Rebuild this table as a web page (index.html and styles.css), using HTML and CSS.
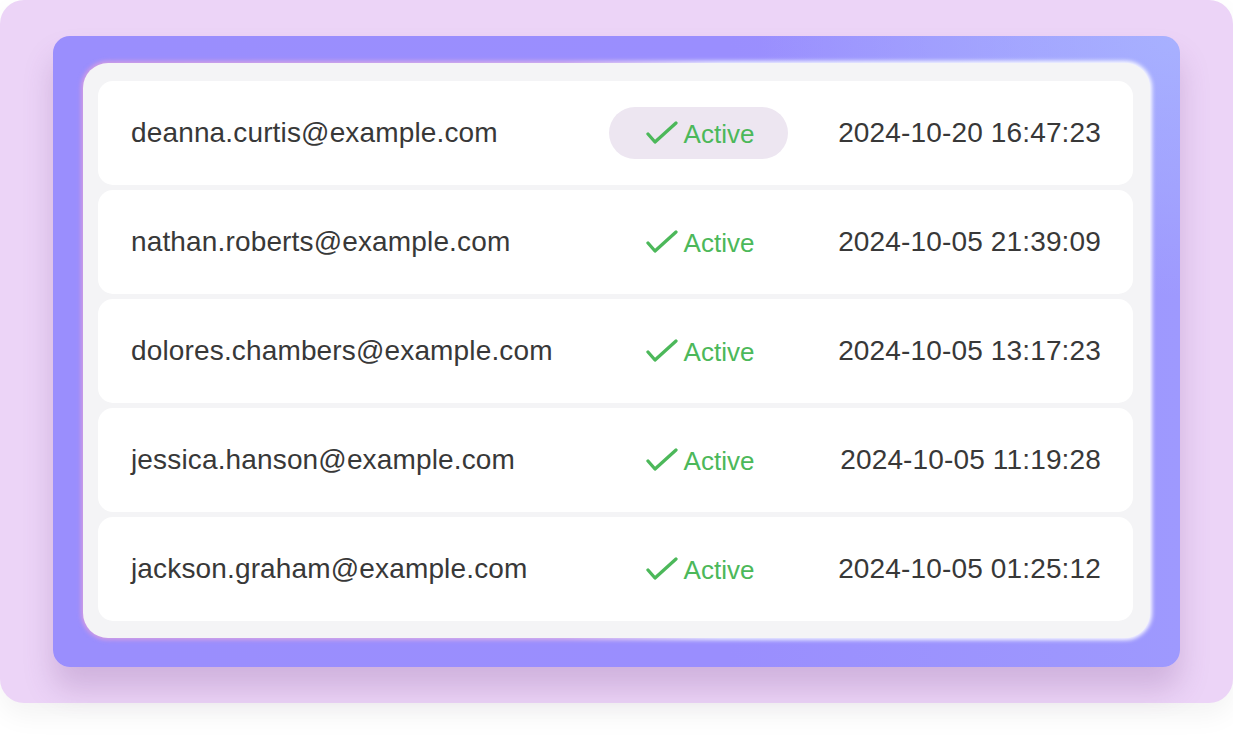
FILE: index.html
```html
<!DOCTYPE html>
<html>
<head>
<meta charset="utf-8">
<link rel="stylesheet" href="styles.css">
</head>
<body>
<div class="stage">
  <div class="card">
    <div class="panel">
      <div class="row">
        <span class="email">deanna.curtis@example.com</span>
        <span class="status hover"><svg class="check" viewBox="0 0 34 26" width="34" height="26"><polyline points="3,13 10,21 31,2" /></svg><span>Active</span></span>
        <span class="date">2024-10-20 16:47:23</span>
      </div>
      <div class="row">
        <span class="email">nathan.roberts@example.com</span>
        <span class="status"><svg class="check" viewBox="0 0 34 26" width="34" height="26"><polyline points="3,13 10,21 31,2" /></svg><span>Active</span></span>
        <span class="date">2024-10-05 21:39:09</span>
      </div>
      <div class="row">
        <span class="email">dolores.chambers@example.com</span>
        <span class="status"><svg class="check" viewBox="0 0 34 26" width="34" height="26"><polyline points="3,13 10,21 31,2" /></svg><span>Active</span></span>
        <span class="date">2024-10-05 13:17:23</span>
      </div>
      <div class="row">
        <span class="email">jessica.hanson@example.com</span>
        <span class="status"><svg class="check" viewBox="0 0 34 26" width="34" height="26"><polyline points="3,13 10,21 31,2" /></svg><span>Active</span></span>
        <span class="date">2024-10-05 11:19:28</span>
      </div>
      <div class="row">
        <span class="email">jackson.graham@example.com</span>
        <span class="status"><svg class="check" viewBox="0 0 34 26" width="34" height="26"><polyline points="3,13 10,21 31,2" /></svg><span>Active</span></span>
        <span class="date">2024-10-05 01:25:12</span>
      </div>
    </div>
  </div>
</div>
</body>
</html>
```

FILE: styles.css
```css
* { box-sizing: border-box; }
html, body { margin: 0; padding: 0; background: #ffffff; }
body {
  font-family: "Liberation Sans", Arial, sans-serif;
  width: 1233px;
  height: 744px;
  overflow: hidden;
}
.stage {
  width: 1233px;
  height: 703px;
  background: #ecd4f7;
  border-radius: 24px;
  padding: 36px 53px 0 53px;
  box-shadow: 0 12px 28px rgba(0, 0, 0, 0.05);
}
.card {
  position: relative;
  z-index: 0;
  width: 1127px;
  height: 631px;
  border-radius: 17px;
  background:
    radial-gradient(ellipse 420px 260px at 100% 0%, rgba(168, 178, 255, 0.95), rgba(168, 178, 255, 0) 100%),
    linear-gradient(to right, #9a8efd 0%, #9a8efe 60%, #9e99fe 100%);
  padding: 27px 30px 0 30px;
  box-shadow: 0 22px 30px rgba(110, 60, 130, 0.22);
}
.panel {
  position: relative;
  width: 1067px;
  height: 575px;
  background: #f4f4f6;
  border-radius: 25px;
  padding: 18px 17px 17px 15px;
  display: flex;
  flex-direction: column;
  gap: 5px;
}
.panel::before {
  content: "";
  position: absolute;
  inset: -2px;
  border-radius: 27px;
  background: linear-gradient(to right, #d29be2 0%, #d9b0ea 45%, #eef2ff 60%, #ffffff 100%);
  filter: blur(2px);
  z-index: -1;
}
.row {
  height: 104px;
  background: #ffffff;
  border-radius: 15px;
  display: grid;
  grid-template-columns: 478px 179px 1fr;
  align-items: center;
  padding: 0 32px 0 33px;
  color: #383838;
}
.email {
  font-size: 28px;
  letter-spacing: 0.15px;
}
.status {
  height: 52px;
  border-radius: 26px;
  display: flex;
  align-items: center;
  justify-content: center;
  gap: 5px;
  color: #4cb85a;
  font-size: 26px;
  padding-top: 2px;
}
.status.hover { background: #ede6f1; }
.check {
  display: block;
  margin-top: -1px;
  margin-left: 2px;
}
.check polyline {
  fill: none;
  stroke: #4cb85a;
  stroke-width: 3.3;
  stroke-linecap: round;
  stroke-linejoin: round;
}
.date {
  justify-self: end;
  font-size: 28px;
  letter-spacing: 0.15px;
}
```
